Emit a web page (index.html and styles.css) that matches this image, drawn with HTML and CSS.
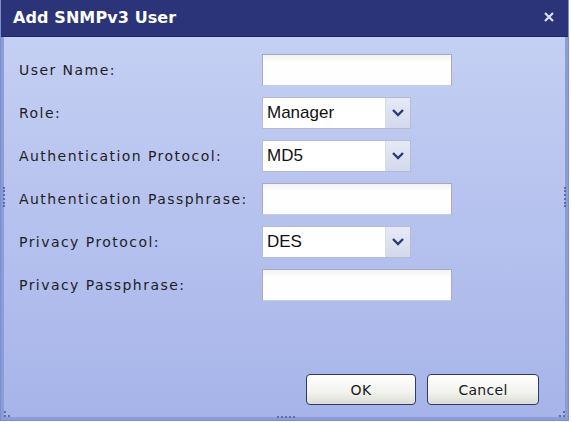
FILE: index.html
```html
<!DOCTYPE html>
<html lang="en">
<head>
	<meta charset="UTF-8">
	<title>Add SNMPv3 User</title>
	<link rel="stylesheet" href="styles.css">
</head>
<body>
	<div class="dialog">
		<div class="titlebar">
			<span class="title">Add SNMPv3 User</span>
			<span class="close"><svg width="10" height="10" viewBox="0 0 10 10"><path d="M1 1 L9 9 M9 1 L1 9" stroke="#dde1f2" stroke-width="2.2"/></svg></span>
		</div>
		<div class="body">
			<span class="grip grip-left"></span>
			<span class="grip grip-right"></span>
			<span class="grip grip-bottom"></span>
			<span class="grip grip-corner-l"></span>
			<span class="grip grip-corner-r"></span>
			<div class="form">
				<label class="lbl">User Name:</label>
				<div class="field"><input class="text" type="text"></div>

				<label class="lbl">Role:</label>
				<div class="field">
					<div class="combo"><span class="value">Manager</span><span class="arrow"><svg width="12" height="8" viewBox="0 0 12 8"><path d="M1 1 L6 6 L11 1" fill="none" stroke="#2b3a7a" stroke-width="2.4"/></svg></span></div>
				</div>

				<label class="lbl">Authentication Protocol:</label>
				<div class="field">
					<div class="combo"><span class="value">MD5</span><span class="arrow"><svg width="12" height="8" viewBox="0 0 12 8"><path d="M1 1 L6 6 L11 1" fill="none" stroke="#2b3a7a" stroke-width="2.4"/></svg></span></div>
				</div>

				<label class="lbl">Authentication Passphrase:</label>
				<div class="field"><input class="text" type="text"></div>

				<label class="lbl">Privacy Protocol:</label>
				<div class="field">
					<div class="combo"><span class="value">DES</span><span class="arrow"><svg width="12" height="8" viewBox="0 0 12 8"><path d="M1 1 L6 6 L11 1" fill="none" stroke="#2b3a7a" stroke-width="2.4"/></svg></span></div>
				</div>

				<label class="lbl">Privacy Passphrase:</label>
				<div class="field"><input class="text" type="text"></div>
			</div>
			<div class="buttons">
				<button class="btn">OK</button>
				<button class="btn">Cancel</button>
			</div>
		</div>
	</div>
</body>
</html>
```

FILE: styles.css
```css
* {
	margin: 0;
	padding: 0;
	box-sizing: border-box;
}
body {
	width: 572px;
	height: 422px;
	background: #ffffff;
	font-family: "DejaVu Sans", Verdana, sans-serif;
	overflow: hidden;
}
.dialog {
	width: 569px;
	height: 421px;
	border: 1px solid #7d8fc6;
	border-top: none;
	display: flex;
	flex-direction: column;
	background: #a9b6ea;
}
.titlebar {
	height: 37px;
	background: #2b3479;
	display: flex;
	align-items: center;
	justify-content: space-between;
	padding: 0 12px 2px 12px;
	border-bottom: 1px solid #1f275e;
}
.title {
	color: #ffffff;
	font-family: "DejaVu Sans", Verdana, sans-serif;
	font-weight: bold;
	font-size: 16px;
	letter-spacing: 0.1px;
}
.close {
	display: flex;
	padding-right: 2px;
}
.body {
	flex: 1;
	position: relative;
	border-left: 3px solid #8a9dd8;
	border-right: 3px solid #8a9dd8;
	border-bottom: 3px solid #8a9dd8;
	background: linear-gradient(#c4cff3, #a7b4e9);
	display: flex;
	flex-direction: column;
	justify-content: space-between;
	padding: 11px 0 12px 15px;
}
.form {
	display: grid;
	grid-template-columns: 243px 200px;
	grid-auto-rows: 43px;
	align-items: center;
}
.lbl {
	font-size: 14px;
	color: #1e1e1e;
	letter-spacing: 1.45px;
}
.text {
	width: 190px;
	height: 32px;
	border: 1px solid #a5acc0;
	border-bottom-color: #c8cdda;
	background: linear-gradient(#f2f2f2, #ffffff 25%, #fdfcff);
	outline: none;
}
.combo {
	width: 149px;
	height: 32px;
	display: flex;
	border: 1px solid #b5bcd0;
	background: #ffffff;
}
.combo .value {
	flex: 1;
	font-family: "Liberation Sans", Arial, sans-serif;
	font-size: 17px;
	color: #111111;
	padding: 5px 0 0 4px;
}
.combo .arrow {
	width: 25px;
	border-left: 1px solid #d7dbe8;
	background: linear-gradient(#e6eaf6, #d3d9ec);
	display: flex;
	align-items: center;
	justify-content: center;
}
.buttons {
	display: flex;
	justify-content: flex-end;
	gap: 11px;
	padding-right: 26px;
}
.btn {
	width: 110px;
	height: 31px;
	border: 1px solid #2e3a6e;
	border-radius: 4px;
	background: linear-gradient(#ffffff, #f2f2ee 60%, #dcdcd4);
	font-family: "DejaVu Sans", Verdana, sans-serif;
	font-size: 14px;
	letter-spacing: 0.3px;
	color: #1a1a1a;
}
.btn + .btn {
	width: 112px;
}
.grip {
	position: absolute;
	border-style: dotted;
	border-color: #5c6ea8;
	border-width: 0;
}
.grip-left {
	left: -1px;
	top: 150px;
	height: 20px;
	border-left-width: 2px;
}
.grip-right {
	right: -1px;
	top: 150px;
	height: 20px;
	border-right-width: 2px;
}
.grip-bottom {
	left: 273px;
	bottom: -1px;
	width: 18px;
	border-bottom-width: 2px;
}
.grip-corner-l {
	left: 0;
	bottom: 0;
	width: 6px;
	height: 6px;
	border-left-width: 2px;
	border-bottom-width: 2px;
}
.grip-corner-r {
	right: 0;
	bottom: 0;
	width: 6px;
	height: 6px;
	border-right-width: 2px;
	border-bottom-width: 2px;
}
```
